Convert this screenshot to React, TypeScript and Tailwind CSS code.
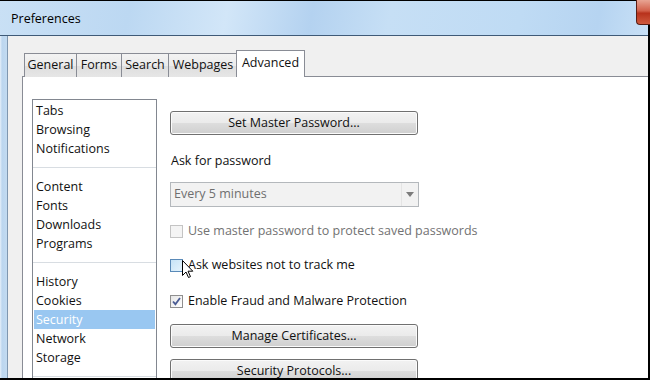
import React from "react";

const tabs = [
  { label: "General", w: "w-[53px]" },
  { label: "Forms", w: "w-[46px]" },
  { label: "Search", w: "w-[48px]" },
  { label: "Webpages", w: "w-[70px]" },
];

const sections: (string | null)[] = [
  "Tabs",
  "Browsing",
  "Notifications",
  null,
  "Content",
  "Fonts",
  "Downloads",
  "Programs",
  null,
  "History",
  "Cookies",
  "Security",
  "Network",
  "Storage",
  null,
];

function WinButton({ label }: { label: string }) {
  return (
    <div className="h-[24px] w-[248px] rounded-[3px] border border-[#707070] bg-[linear-gradient(to_bottom,#f2f2f2_0%,#ebebeb_48%,#dddddd_52%,#cfcfcf_100%)] shadow-[inset_0_0_0_1px_#fbfbfb] flex items-center justify-center text-[12.5px] text-[#111] whitespace-nowrap">
      {label}
    </div>
  );
}

function CheckRow({
  label,
  state,
  className = "",
}: {
  label: string;
  state: "disabled" | "hover" | "checked";
  className?: string;
}) {
  const box =
    state === "disabled"
      ? "border-[#c4c4c4] bg-[#f4f4f4]"
      : state === "hover"
      ? "border-[#5a8ab8] bg-[linear-gradient(135deg,#c6e3f7,#e4f3fc)]"
      : "border-[#8f8f8f] bg-[linear-gradient(135deg,#e6e6e6,#ffffff)]";
  return (
    <div className={`h-[20px] flex items-center whitespace-nowrap ${className}`}>
      <div className={`w-[13px] h-[13px] shrink-0 border ${box} flex items-center justify-center`}>
        {state === "checked" && (
          <svg width="9" height="9" viewBox="0 0 9 9">
            <path d="M1 4.5 L3.4 7.2 L8 1" fill="none" stroke="#4a5c94" strokeWidth="1.8" />
          </svg>
        )}
      </div>
      <span
        className={`ml-[5px] text-[12.5px] ${state === "disabled" ? "text-[#727272]" : "text-[#111]"}`}
      >
        {label}
      </span>
    </div>
  );
}

export default function App() {
  return (
    <div className="relative w-[650px] h-[380px] overflow-hidden bg-black font-['Open_Sans',sans-serif]">
      <div className="flex flex-col w-[648px] h-[377px] mt-px">
        {/* title bar */}
        <div className="h-[35px] shrink-0 flex items-center pl-[11px] pt-[3px] border-b border-[#3f5a77] bg-[linear-gradient(100deg,#c9e0f5_0%,#bcd8f2_20%,#d2e6f8_35%,#b4d2f0_48%,#c6dff5_60%,#bfdbf4_80%,#b6d4f1_92%,#c8e0f6_100%)]">
          <span className="text-[12.5px] text-black">Preferences</span>
        </div>

        <div className="flex flex-1 min-h-0">
          <div className="w-[8px] shrink-0 bg-[linear-gradient(to_right,#e6f0fa,#bcd6ef_30%,#c3dbf1)] border-r border-[#7f97b0]" />

          {/* client area */}
          <div className="flex-1 min-w-0 bg-[#f0f0f0] pl-[14px] pt-[14px] flex flex-col">
            {/* tab strip */}
            <div className="flex items-end h-[27px] pl-[2px] relative z-10 -mb-px">
              {tabs.map((t, i) => (
                <div
                  key={t.label}
                  className={`${t.w} h-[24px] ${i > 0 ? "-ml-px" : ""} border border-b-0 border-[#898c95] bg-[linear-gradient(to_bottom,#f3f3f3,#ebebeb_50%,#dedede_51%,#e6e6e6)] flex items-center justify-center text-[12.5px] text-[#111]`}
                >
                  {t.label}
                </div>
              ))}
              <div className="w-[69px] h-[27px] -ml-[2px] border border-b-0 border-[#898c95] bg-white flex items-center justify-center text-[12.5px] text-[#111] pb-[2px]">
                Advanced
              </div>
            </div>

            {/* panel */}
            <div className="flex-1 min-h-0 bg-white border-t border-l border-[#898c95] flex items-start overflow-hidden">
              {/* section list */}
              <div className="ml-[9px] mt-[22px] w-[125px] h-[400px] shrink-0 border border-[#828790] pt-[1px] text-[12.5px] text-[#111]">
                {sections.map((s, i) =>
                  s === null ? (
                    <div key={i} className="h-[19px] flex items-center">
                      <div className="h-px w-full bg-[#d8dde2]" />
                    </div>
                  ) : (
                    <div
                      key={i}
                      className={`h-[19px] leading-[19px] mx-[1px] pl-[2px] ${
                        s === "Security" ? "bg-[#99c7f1] text-white" : ""
                      }`}
                    >
                      {s}
                    </div>
                  )
                )}
              </div>

              {/* options */}
              <div className="ml-[13px] mt-[34px] w-[248px] shrink-0 flex flex-col">
                <WinButton label="Set Master Password..." />
                <div className="mt-[16px] h-[19px] leading-[19px] text-[12.5px] text-[#111] pl-[1px]">
                  Ask for password
                </div>
                <div className="mt-[12px] h-[25px] w-[249px] border border-[#b4b8bc] bg-[#f2f2f2] flex items-center">
                  <span className="flex-1 pl-[3px] text-[12.5px] text-[#6f6f6f]">Every 5 minutes</span>
                  <div className="w-[17px] h-full border-l border-[#e4e4e4] flex items-center justify-center">
                    <svg width="8" height="5" viewBox="0 0 8 5">
                      <path d="M0 0 L8 0 L4 5 Z" fill="#7c7c7c" />
                    </svg>
                  </div>
                </div>
                <CheckRow className="mt-[14px]" state="disabled" label="Use master password to protect saved passwords" />
                <CheckRow className="mt-[14px]" state="hover" label="Ask websites not to track me" />
                <CheckRow className="mt-[16px]" state="checked" label="Enable Fraud and Malware Protection" />
                <div className="mt-[13px]">
                  <WinButton label="Manage Certificates..." />
                </div>
                <div className="mt-[11px]">
                  <WinButton label="Security Protocols..." />
                </div>
              </div>
            </div>
          </div>
        </div>
      </div>

      {/* close button */}
      <div className="absolute top-0 right-0 w-[14px] h-[25px] rounded-bl-[4px] border-l border-b border-[#5a1d14] bg-[linear-gradient(to_bottom,#e8a493,#d2604a_45%,#b8321c_55%,#cf5a3e)]" />

      {/* mouse pointer */}
      <svg className="absolute left-[182px] top-[260px]" width="12" height="19" viewBox="0 0 12 19">
        <path
          d="M0.5 0.5 L0.5 15.5 L4 12 L6.5 17.5 L8.5 16.6 L6 11.2 L10.8 11.2 Z"
          fill="white"
          stroke="black"
          strokeWidth="1"
          strokeLinejoin="round"
        />
      </svg>
    </div>
  );
}
